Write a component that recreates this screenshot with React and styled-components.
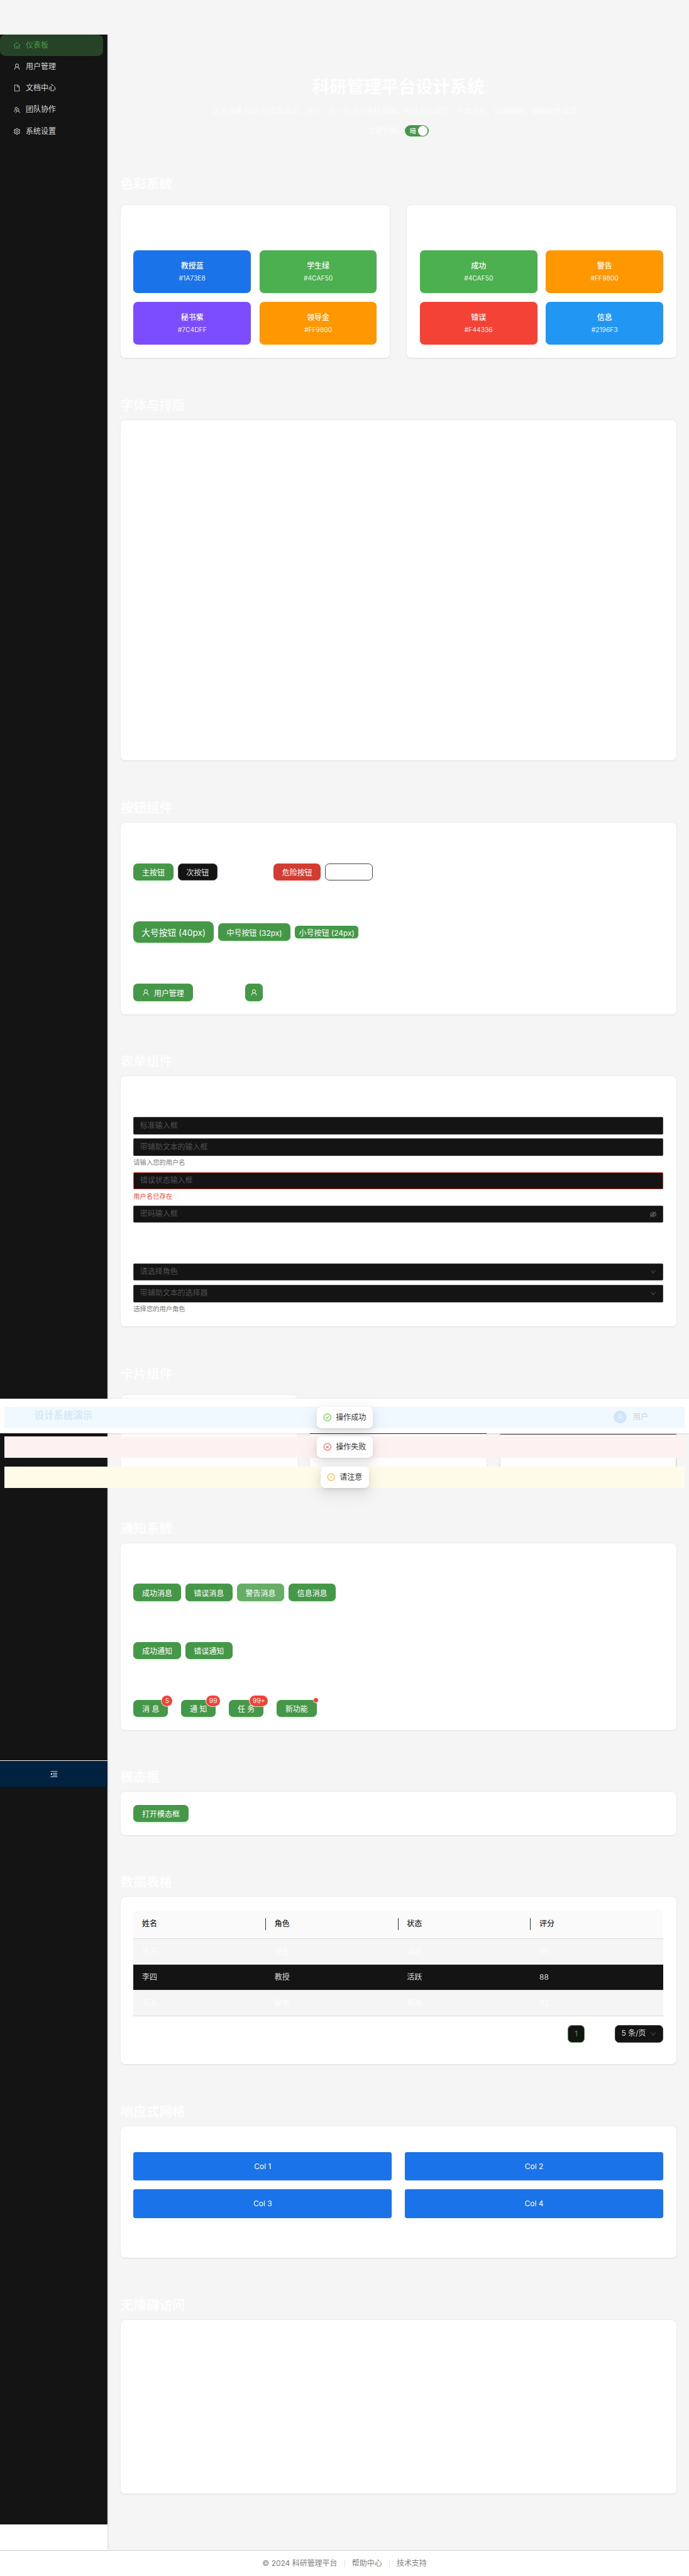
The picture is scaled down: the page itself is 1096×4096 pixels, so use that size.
import React from "react";
import styled, { createGlobalStyle, css } from "styled-components";
import {
  AiOutlineHome,
  AiOutlineUser,
  AiOutlineFile,
  AiOutlineTeam,
  AiOutlineSetting,
  AiOutlineMenuFold,
  AiOutlineEyeInvisible,
  AiOutlineDown,
  AiOutlineCheckCircle,
  AiOutlineCloseCircle,
  AiOutlineExclamationCircle,
} from "react-icons/ai";

const GlobalStyle = createGlobalStyle`
  *, *::before, *::after { box-sizing: border-box; }
  html, body { margin: 0; background: #f5f5f5; }
  body { overflow-x: hidden; }
`;

const Page = styled.div`
  position: relative;
  zoom: 0.85636;
  width: 1280px;
  height: 4783px;
  display: flex;
  flex-direction: column;
  padding-top: 64px;
  overflow: hidden;
  background: #f5f5f5;
  font-family: Inter, "Noto Sans CJK SC", sans-serif;
  font-size: 14px;
  line-height: 22px;
`;

const Body = styled.div`
  display: flex;
  height: 4671px;
`;

const Sider = styled.aside`
  position: relative;
  width: 200px;
  flex: none;
  background: #fff;
  box-shadow: 1px 0 3px rgba(0, 0, 0, 0.12);
`;

const Menu = styled.nav`
  height: 4623px;
  background: #141414;
  border-right: 1px solid #303030;
`;

const MenuItem = styled.div`
  display: flex;
  align-items: center;
  gap: 10px;
  width: 191px;
  height: 40px;
  padding-left: 24px;
  border-radius: 10px;
  color: ${(p) => (p.$active ? "#459b48" : "rgba(255,255,255,.85)")};
  background: ${(p) => (p.$active ? "#264227" : "transparent")};
`;

const Collapse = styled.div`
  position: absolute;
  left: 0;
  top: 3205px;
  width: 200px;
  height: 48px;
  display: flex;
  align-items: center;
  justify-content: center;
  color: #fff;
  background: #002140;
  border-top: 1px solid #f0f0f0;
`;

const Main = styled.main`
  flex: 1;
  padding: 0 24px;
`;

const Hero = styled.header`
  height: 189.3px;
  padding-top: 77px;
  text-align: center;
  color: rgba(255, 255, 255, 0.7);
`;

const HeroTitle = styled.h1`
  margin: 0 0 15px;
  font-size: 32px;
  line-height: 40px;
  font-weight: 700;
  color: rgba(255, 255, 255, 0.92);
`;

const HeroText = styled.p`
  margin: 0 0 14px;
`;

const ThemeRow = styled.div`
  display: flex;
  justify-content: center;
  align-items: center;
  gap: 8px;
`;

const Toggle = styled.span`
  display: flex;
  align-items: center;
  justify-content: space-between;
  width: 44px;
  height: 22px;
  padding: 0 2px 0 9px;
  border-radius: 11px;
  background: #469849;
  color: #fff;
  font-size: 12px;
`;

const Knob = styled.i`
  width: 18px;
  height: 18px;
  border-radius: 50%;
  background: #fff;
`;

const Section = styled.section`
  padding-top: 72px;
`;

const SectionTitle = styled.h2`
  margin: 0 0 ${(p) => (p.$loose ? 22.8 : 10.8)}px;
  font-size: 24px;
  line-height: 32.4px;
  font-weight: 600;
  color: rgba(255, 255, 255, 0.85);
`;

const Card = styled.div`
  height: ${(p) => p.$h}px;
  padding: ${(p) => p.$top ?? 24}px 24px 24px;
  border-radius: 8px;
  background: #fff;
  box-shadow: 0 1px 3px rgba(0, 0, 0, 0.1);
`;

const Columns = styled.div`
  display: grid;
  grid-template-columns: repeat(${(p) => p.$n}, 1fr);
  gap: ${(p) => p.$gap};
`;

const Swatch = styled.div`
  display: flex;
  flex-direction: column;
  align-items: center;
  justify-content: center;
  gap: 4px;
  height: 80px;
  border-radius: 8px;
  color: #fff;
  background: ${(p) => p.$color};
`;

const SwatchName = styled.div`
  line-height: 20px;
  font-weight: 500;
`;

const SwatchCode = styled.div`
  font-size: 12px;
  line-height: 18px;
  opacity: 0.9;
`;

const ButtonRow = styled.div`
  display: flex;
  align-items: center;
  gap: ${(p) => p.$gap ?? 8}px;
  height: ${(p) => p.$h ?? 32}px;
  margin-bottom: ${(p) => p.$mb ?? 0}px;
`;

const kinds = {
  primary: css`
    color: #fff;
    background: #469849;
    box-shadow: 0 2px 0 rgba(40, 255, 50, 0.16);
  `,
  hover: css`
    color: #fff;
    background: #66ad68;
    box-shadow: 0 2px 0 rgba(40, 255, 50, 0.16);
  `,
  plain: css`
    color: rgba(255, 255, 255, 0.88);
    background: #141414;
    border: 1px solid #424242;
  `,
  danger: css`
    color: #fff;
    background: #d23c31;
    box-shadow: 0 2px 0 rgba(255, 40, 40, 0.12);
  `,
  outline: css`
    background: #fff;
    border: 1px solid #424242;
  `,
};

const sizes = {
  lg: css`height: 40px; font-size: 16px; border-radius: 10px;`,
  md: css`height: 32px; font-size: 14px; border-radius: 8px;`,
  sm: css`height: 24px; font-size: 14px; border-radius: 6px;`,
};

const Button = styled.button`
  position: relative;
  display: inline-flex;
  align-items: center;
  justify-content: center;
  gap: 8px;
  flex: none;
  width: ${(p) => p.$w}px;
  padding: 0;
  border: 0;
  font-family: inherit;
  font-weight: 400;
  white-space: pre;
  ${(p) => sizes[p.$size ?? "md"]}
  ${(p) => kinds[p.$kind ?? "primary"]}
  margin-left: ${(p) => p.$ml ?? 0}px;
`;

const Badge = styled.span`
  position: absolute;
  top: -8px;
  left: ${(p) => p.$left}px;
  width: ${(p) => p.$w}px;
  height: 20px;
  border-radius: 10px;
  box-shadow: 0 0 0 1px #fff;
  background: #f44336;
  color: #fff;
  font-size: 12px;
  line-height: 20px;
  text-align: center;
`;

const Dot = styled.span`
  position: absolute;
  top: -3px;
  right: -3px;
  width: 8px;
  height: 8px;
  border-radius: 50%;
  background: #f44336;
  box-shadow: 0 0 0 1px #fff;
`;

const Field = styled.div`
  display: flex;
  align-items: center;
  justify-content: space-between;
  height: 32px;
  margin-bottom: ${(p) => p.$mb ?? 8}px;
  padding: 0 11px;
  border: 1px solid ${(p) => (p.$error ? "#d23c31" : "#424242")};
  border-radius: 2px;
  background: #141414;
  color: #505050;
`;

const FieldIcon = styled.span`
  display: flex;
  font-size: ${(p) => p.$size}px;
  color: ${(p) => p.$color};
`;

const Hint = styled.div`
  margin: -4px 0 7.6px;
  padding-top: 4px;
  font-size: 12px;
  line-height: 18.6px;
  color: ${(p) => (p.$error ? "#f44336" : "#808080")};
`;

const CardRow = styled.div`
  display: grid;
  grid-template-columns: repeat(3, 328px);
  gap: 24px;
  height: 159.6px;
  align-items: end;
`;

const Panel = styled.div`
  height: ${(p) => p.$h}px;
  border-radius: 8px;
  background: #fff;
  box-shadow: 0 1px 3px rgba(0, 0, 0, 0.1);
  ${(p) => p.$bordered && "border-right: 1px solid #d4d4d4; border-left: 1px solid #e4e4e4;"}
`;

const PanelHead = styled.div`
  height: ${(p) => p.$h}px;
  border-bottom: 1px solid #303030;
`;

const Table = styled.div`
  border-radius: 8px 8px 0 0;
  overflow: hidden;
`;

const Tr = styled.div`
  display: grid;
  grid-template-columns: repeat(4, 246px);
  align-items: center;
  height: ${(p) => (p.$head ? 54 : 48)}px;
  border-bottom: 1px solid #dcdcdc;
  font-weight: ${(p) => (p.$head ? 500 : 400)};
  color: ${(p) => (p.$head ? "#1f1f1f" : p.$dark ? "rgba(255,255,255,.85)" : "#fdfdfd")};
  background: ${(p) => (p.$head ? "#fafafa" : p.$dark ? "#141414" : "#f5f5f5")};
`;

const Td = styled.div`
  padding-left: 16px;
  ${(p) =>
    p.$divider &&
    css`
      border-right: 1px solid #303030;
    `}
`;

const Pager = styled.div`
  display: flex;
  justify-content: flex-end;
  gap: 56px;
  margin-top: 16px;
`;

const PageNumber = styled.span`
  width: 32px;
  height: 32px;
  border: 1px solid #469849;
  border-radius: 8px;
  background: #141414;
  color: #469849;
  line-height: 31px;
  text-align: center;
`;

const PageSize = styled.span`
  display: flex;
  align-items: center;
  justify-content: space-between;
  width: 90px;
  height: 32px;
  padding: 0 11px;
  border: 1px solid #424242;
  border-radius: 8px;
  background: #141414;
  color: rgba(255, 255, 255, 0.85);
`;

const GridCell = styled.div`
  height: 53.4px;
  border-radius: 4px;
  background: #1a73e8;
  color: #fff;
  line-height: 54px;
  text-align: center;
`;

const Footer = styled.footer`
  display: flex;
  justify-content: center;
  align-items: center;
  height: 48px;
  flex: none;
  border-top: 1px solid #d9d9d9;
  background: #fff;
  color: #808080;
`;

const FooterItem = styled.span`
  padding: 0 13px;
  line-height: 14px;
  & + & {
    border-left: 1px solid #e0e0e0;
  }
`;

const TopBar = styled.div`
  position: absolute;
  left: 0;
  top: 2597px;
  width: 1280px;
  height: 64px;
  background: #fff;
  box-shadow: 0 1px 4px rgba(0, 0, 0, 0.2);
`;

const StripContent = styled.div`
  position: absolute;
  inset: 0;
  display: flex;
  align-items: center;
  justify-content: space-between;
  padding: 0 68px 5px 56px;
`;

const Brand = styled.strong`
  font-size: 18px;
  font-weight: 600;
  color: #d5e8fb;
`;

const Account = styled.div`
  display: flex;
  align-items: center;
  gap: 12px;
  padding-top: 3px;
  color: #cbd2d8;
`;

const Avatar = styled.span`
  display: flex;
  align-items: center;
  justify-content: center;
  width: 24px;
  height: 24px;
  border-radius: 50%;
  background: #d0e5fb;
  color: #eff7fe;
`;

const Strip = styled.div`
  position: absolute;
  z-index: 1;
  left: 8px;
  top: ${(p) => p.$top}px;
  width: 1264px;
  height: 40px;
  display: flex;
  justify-content: center;
  background: ${(p) => p.$bg};
`;

const Message = styled.div`
  display: flex;
  align-items: center;
  gap: 8px;
  height: 40px;
  padding: 0 12px;
  border-radius: 8px;
  background: #fff;
  color: rgba(0, 0, 0, 0.85);
  box-shadow: 0 6px 16px rgba(0, 0, 0, 0.08), 0 3px 6px -4px rgba(0, 0, 0, 0.12),
    0 9px 28px 8px rgba(0, 0, 0, 0.05);
`;

const MessageIcon = styled.span`
  display: flex;
  font-size: 16px;
  color: ${(p) => p.$color};
`;

const menu = [
  [AiOutlineHome, "仪表板"],
  [AiOutlineUser, "用户管理"],
  [AiOutlineFile, "文档中心"],
  [AiOutlineTeam, "团队协作"],
  [AiOutlineSetting, "系统设置"],
];

const palettes = [
  [
    ["教授蓝", "#1A73E8"],
    ["学生绿", "#4CAF50"],
    ["秘书紫", "#7C4DFF"],
    ["领导金", "#FF9800"],
  ],
  [
    ["成功", "#4CAF50"],
    ["警告", "#FF9800"],
    ["错误", "#F44336"],
    ["信息", "#2196F3"],
  ],
];

const rows = [
  ["张三", "学生", "活跃", "95"],
  ["李四", "教授", "活跃", "88"],
  ["王五", "秘书", "离线", "92"],
];

const messages = [
  [2612, "#f0f9ff", AiOutlineCheckCircle, "#52c41a", "操作成功"],
  [2667, "#fef1f1", AiOutlineCloseCircle, "#ff4d4f", "操作失败"],
  [2723, "#fefbe9", AiOutlineExclamationCircle, "#faad14", "请注意"],
];

export default function App() {
  return (
    <Page>
      <GlobalStyle />
      <Body>
        <Sider>
          <Menu>
            {menu.map(([Icon, label], i) => (
              <MenuItem key={label} $active={i === 0}>
                <Icon />
                {label}
              </MenuItem>
            ))}
          </Menu>
          <Collapse>
            <AiOutlineMenuFold size={16} />
          </Collapse>
        </Sider>
        <Main>
          <Hero>
            <HeroTitle>科研管理平台设计系统</HeroTitle>
            <HeroText>
              这是故事 000 的实现演示，展示了统一的设计系统基础，包括色彩规范、字体系统、间距网格、基础组件库等。
            </HeroText>
            <ThemeRow>
              主题切换:
              <Toggle>
                暗<Knob />
              </Toggle>
            </ThemeRow>
          </Hero>

          <Section>
            <SectionTitle $loose>色彩系统</SectionTitle>
            <Columns $n={2} $gap="32px">
              {palettes.map((list, i) => (
                <Card key={i} $h={284} $top={84}>
                  <Columns $n={2} $gap="16px">
                    {list.map(([name, color]) => (
                      <Swatch key={name} $color={color}>
                        <SwatchName>{name}</SwatchName>
                        <SwatchCode>{color}</SwatchCode>
                      </Swatch>
                    ))}
                  </Columns>
                </Card>
              ))}
            </Columns>
          </Section>

          <Section>
            <SectionTitle>字体与排版</SectionTitle>
            <Card $h={632.4} />
          </Section>

          <Section>
            <SectionTitle>按钮组件</SectionTitle>
            <Card $h={355.8} $top={76.2}>
              <ButtonRow $mb={75.4}>
                <Button $w={74}>主按钮</Button>
                <Button $w={74} $kind="plain">次按钮</Button>
                <Button $w={88} $kind="danger" $ml={96}>危险按钮</Button>
                <Button $w={88} $kind="outline" />
              </ButtonRow>
              <ButtonRow $h={40} $mb={76}>
                <Button $w={149} $size="lg">大号按钮 (40px)</Button>
                <Button $w={135}>中号按钮 (32px)</Button>
                <Button $w={118} $size="sm">小号按钮 (24px)</Button>
              </ButtonRow>
              <ButtonRow>
                <Button $w={110}>
                  <AiOutlineUser />
                  用户管理
                </Button>
                <Button $w={32} $ml={90}>
                  <AiOutlineUser />
                </Button>
              </ButtonRow>
            </Card>
          </Section>

          <Section>
            <SectionTitle>表单组件</SectionTitle>
            <Card $h={465} $top={76}>
              <Field>标准输入框</Field>
              <Field $mb={4}>带辅助文本的输入框</Field>
              <Hint>请输入您的用户名</Hint>
              <Field $error $mb={4}>错误状态输入框</Field>
              <Hint $error>用户名已存在</Hint>
              <Field $mb={75.4}>
                密码输入框
                <FieldIcon $size={14} $color="#858585">
                  <AiOutlineEyeInvisible />
                </FieldIcon>
              </Field>
              <Field>
                请选择角色
                <FieldIcon $size={12} $color="#5a5a5a">
                  <AiOutlineDown />
                </FieldIcon>
              </Field>
              <Field $mb={4}>
                带辅助文本的选择器
                <FieldIcon $size={12} $color="#5a5a5a">
                  <AiOutlineDown />
                </FieldIcon>
              </Field>
              <Hint>选择您的用户角色</Hint>
            </Card>
          </Section>

          <Section>
            <SectionTitle $loose>卡片组件</SectionTitle>
            <CardRow>
              <Panel $h={159.6} />
              <Panel $h={146}>
                <PanelHead $h={59} />
              </Panel>
              <Panel $h={146} $bordered>
                <PanelHead $h={60} />
              </Panel>
            </CardRow>
          </Section>

          <Section>
            <SectionTitle>通知系统</SectionTitle>
            <Card $h={346.8} $top={75.6}>
              <ButtonRow $mb={75.8}>
                <Button $w={88}>成功消息</Button>
                <Button $w={88}>错误消息</Button>
                <Button $w={88} $kind="hover">警告消息</Button>
                <Button $w={88}>信息消息</Button>
              </ButtonRow>
              <ButtonRow $mb={75.8}>
                <Button $w={88}>成功通知</Button>
                <Button $w={88}>错误通知</Button>
              </ButtonRow>
              <ButtonRow $gap={24.7}>
                <Button $w={64}>
                  消 息<Badge $w={20} $left={52.5}>5</Badge>
                </Button>
                <Button $w={64}>
                  通 知<Badge $w={26} $left={46.5}>99</Badge>
                </Button>
                <Button $w={64}>
                  任 务<Badge $w={33.5} $left={38.8}>99+</Badge>
                </Button>
                <Button $w={74}>
                  新功能
                  <Dot />
                </Button>
              </ButtonRow>
            </Card>
          </Section>

          <Section>
            <SectionTitle>模态框</SectionTitle>
            <Card $h={80}>
              <Button $w={102}>打开模态框</Button>
            </Card>
          </Section>

          <Section>
            <SectionTitle>数据表格</SectionTitle>
            <Card $h={310.2}>
              <Table>
                <Tr $head>
                  <Td $divider>姓名</Td>
                  <Td $divider>角色</Td>
                  <Td $divider>状态</Td>
                  <Td>评分</Td>
                </Tr>
                {rows.map((row, i) => (
                  <Tr key={row[0]} $dark={i === 1}>
                    {row.map((cell, j) => (
                      <Td key={j}>{cell}</Td>
                    ))}
                  </Tr>
                ))}
              </Table>
              <Pager>
                <PageNumber>1</PageNumber>
                <PageSize>
                  5 条/页
                  <FieldIcon $size={12} $color="#5a5a5a">
                    <AiOutlineDown />
                  </FieldIcon>
                </PageSize>
              </Pager>
            </Card>
          </Section>

          <Section>
            <SectionTitle>响应式网格</SectionTitle>
            <Card $h={244.8} $top={48}>
              <Columns $n={2} $gap="15.6px 24px">
                {[1, 2, 3, 4].map((n) => (
                  <GridCell key={n}>Col {n}</GridCell>
                ))}
              </Columns>
            </Card>
          </Section>

          <Section>
            <SectionTitle>无障碍访问</SectionTitle>
            <Card $h={322.4} />
          </Section>
        </Main>
      </Body>
      <Footer>
        <FooterItem>© 2024 科研管理平台</FooterItem>
        <FooterItem>帮助中心</FooterItem>
        <FooterItem>技术支持</FooterItem>
      </Footer>

      <TopBar />
      {messages.map(([top, bg, Icon, color, text]) => (
        <Strip key={text} $top={top} $bg={bg}>
          {top === 2612 && (
            <StripContent>
              <Brand>设计系统演示</Brand>
              <Account>
                <Avatar>
                  <AiOutlineUser />
                </Avatar>
                用户
              </Account>
            </StripContent>
          )}
          <Message>
            <MessageIcon $color={color}>
              <Icon />
            </MessageIcon>
            {text}
          </Message>
        </Strip>
      ))}
    </Page>
  );
}
